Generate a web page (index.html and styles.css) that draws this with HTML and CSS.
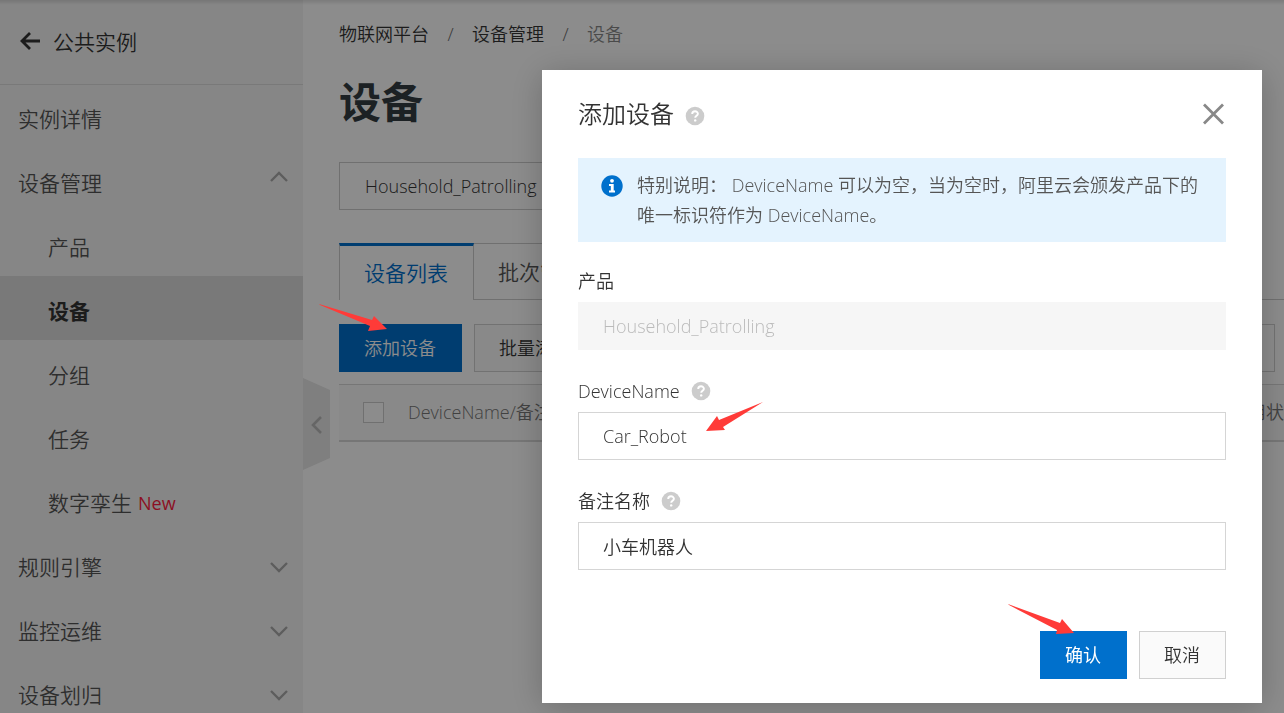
FILE: index.html
```html
<!DOCTYPE html>
<html lang="zh-CN">
<head>
<meta charset="utf-8">
<meta name="viewport" content="width=device-width, initial-scale=1">
<title>设备 - 物联网平台</title>
<link rel="stylesheet" href="styles.css">
</head>
<body>
<svg class="defs" aria-hidden="true">
  <symbol id="chevron" viewBox="0 0 20 12"><path d="M2 2l8 8 8-8" fill="none" stroke="currentColor" stroke-width="2.400"/></symbol>
  <symbol id="help" viewBox="0 0 20 20"><circle cx="10" cy="10" r="9.3" fill="#ccc"/><path d="M7.2 8c0-3.600 5.700-3.500 5.700-.2 0 1.900-2.700 2.100-2.700 4" fill="none" stroke="#fff" stroke-width="1.900"/><circle cx="10.200" cy="14.400" r="1.200" fill="#fff"/></symbol>
</svg>
<div class="app">
  <aside class="sidebar">
    <div class="sidebar-head">
      <a class="back" href="#" aria-label="返回"><svg width="22" height="20" viewBox="0 0 22 20"><path d="M21 9H3M11 1L3 9l8 8" fill="none" stroke="currentColor" stroke-width="2.800"/></svg></a>
      <span>公共实例</span>
    </div>
    <nav class="menu">
      <a class="item" href="#">实例详情</a>
      <a class="item" href="#">设备管理<svg class="chev up"><use href="#chevron"/></svg></a>
      <a class="item sub" href="#">产品</a>
      <a class="item sub active" href="#">设备</a>
      <a class="item sub" href="#">分组</a>
      <a class="item sub" href="#">任务</a>
      <a class="item sub" href="#">数字孪生<span class="new">New</span></a>
      <a class="item" href="#">规则引擎<svg class="chev"><use href="#chevron"/></svg></a>
      <a class="item" href="#">监控运维<svg class="chev"><use href="#chevron"/></svg></a>
      <a class="item" href="#">设备划归<svg class="chev"><use href="#chevron"/></svg></a>
    </nav>
    <button class="collapse" type="button" aria-label="收起菜单"><svg width="12" height="20" viewBox="0 0 12 20"><path d="M10 2l-8 8 8 8" fill="none" stroke="currentColor" stroke-width="2.600"/></svg></button>
  </aside>
  <main class="main">
    <div class="crumbs"><a href="#">物联网平台</a><i>/</i><a href="#">设备管理</a><i>/</i><span>设备</span></div>
    <h1>设备</h1>
    <select class="product-select" aria-label="产品"><option>Household_Patrolling</option></select>
    <div class="tabs">
      <button class="tab on" type="button">设备列表</button>
      <button class="tab" type="button">批次管理</button>
    </div>
    <div class="toolbar">
      <button class="btn primary" type="button">添加设备</button>
      <button class="btn" type="button">批量添加</button>
      <button class="btn refresh" type="button" aria-label="刷新"></button>
    </div>
    <table class="devices">
      <thead><tr>
        <th class="check"><input type="checkbox" aria-label="全选"></th>
        <th>DeviceName/备注名称</th>
        <th class="state">启用状态</th>
      </tr></thead>
    </table>
  </main>
</div>
<div class="overlay">
  <form class="modal" role="dialog" aria-labelledby="dialog-title">
    <header class="modal-head">
      <h2 id="dialog-title">添加设备</h2>
      <svg class="help"><use href="#help"/></svg>
      <button class="close" type="button" aria-label="关闭"><svg width="24" height="24" viewBox="0 0 24 24"><path d="M2 2.500l19 19M21 2.500l-19 19" stroke="currentColor" stroke-width="2.800"/></svg></button>
    </header>
    <div class="notice">
      <svg class="info" viewBox="0 0 22 22"><circle cx="11" cy="11" r="10.700" fill="#0070cc"/><circle cx="11" cy="5.800" r="1.900" fill="#fff"/><path d="M8 9h4.700v6.400H14v2H8v-2h1.800V11H8z" fill="#fff"/></svg>
      <p>特别说明： DeviceName 可以为空，当为空时，阿里云会颁发产品下的唯一标识符作为 DeviceName。</p>
    </div>
    <div class="fields">
      <div class="field">
        <label for="product">产品</label>
        <input id="product" type="text" value="Household_Patrolling" disabled>
      </div>
      <div class="field">
        <label for="device-name">DeviceName<svg class="help"><use href="#help"/></svg></label>
        <input id="device-name" type="text" value="Car_Robot">
      </div>
      <div class="field">
        <label for="remark">备注名称<svg class="help"><use href="#help"/></svg></label>
        <input id="remark" type="text" value="小车机器人">
      </div>
    </div>
    <footer class="actions">
      <button class="btn primary confirm" type="button">确认</button>
      <button class="btn" type="button">取消</button>
    </footer>
  </form>
</div>
<svg class="arrows" aria-hidden="true">
  <path d="M319 304L372 320 374 316 387 329 368 331 370 326 320 305Z"/>
  <path d="M763 402L723 427 725 430 706 431 717 416 719 420Z"/>
  <path d="M1008 604L1060 623 1062 619 1074 633 1056 634 1057 630 1009 605Z"/>
</svg>
</body>
</html>
```

FILE: styles.css
```css
* { box-sizing: border-box; }
body {
  margin: 0;
  color: #333;
  background: #fff;
  font: 350 18px/24px "Segoe UI", "Open Sans", "Noto Sans CJK SC", sans-serif;
  overflow: hidden;
}
a { color: inherit; text-decoration: none; }
button, input, select { font: inherit; color: inherit; }
.defs { position: absolute; width: 0; height: 0; }

.app { display: flex; min-height: 100vh; }
.sidebar { position: relative; flex: 0 0 303px; height: 100vh; background: #f5f5f5; font-size: 21px; }
.sidebar-head {
  display: flex;
  align-items: center;
  gap: 12px;
  height: 84px;
  padding: 0 19px;
  box-shadow: 0 1px #dcdcdc;
}
.back { display: flex; }
.item {
  display: flex;
  align-items: center;
  height: 64px;
  padding: 6px 14px 0 18px;
  color: #555;
}
.sub { padding-left: 48px; }
.active { background: #dcdcdc; color: #333; font-weight: 700; }
.new { margin-left: 6px; color: #ff1d43; font-size: 18px; font-weight: 400; }
.chev { width: 20px; height: 12px; margin-left: auto; color: #aaa; }
.up { transform: rotate(180deg); margin-bottom: 12px; }
.collapse {
  position: absolute;
  left: 100%;
  top: 53%;
  width: 27px;
  height: 92px;
  padding: 6px 7px 0;
  border: 0;
  background: #e7e7e7;
  color: #bbb;
  clip-path: polygon(0 0, 100% 12px, 100% 80px, 0 100%);
}

.main { flex: 1; min-width: 0; padding: 22px 0 0 36px; }
.crumbs { display: flex; }
.crumbs i { width: 43px; text-align: center; color: #666; font-style: normal; }
.crumbs span { color: #888; }
h1 { margin: 24px 0 28px; color: #333d42; font-size: 42px; line-height: 64px; font-weight: 700; }
.product-select {
  display: block;
  appearance: none;
  width: 360px;
  height: 48px;
  padding: 0 25px;
  border: 1px solid #ccc;
  border-radius: 0;
  background: transparent;
}
.tabs { display: flex; height: 57px; margin: 33px 0 24px; box-shadow: inset 0 -1px #ccc; }
.tab {
  padding: 0 24px;
  border: 1px solid #ccc;
  border-left: 0;
  background: transparent;
  color: #555;
  font-size: 21px;
}
.tab.on {
  padding-right: 25px;
  border-left: 1px solid #ccc;
  border-top: 3px solid #0070cc;
  border-bottom: 0;
  background: #fff;
  color: #0070cc;
}
.toolbar { display: flex; gap: 12px; padding-right: 9px; }
.btn {
  height: 48px;
  padding: 0 25px 0 24px;
  border: 1px solid #d0d0d0;
  background: #fafafa;
}
.btn.primary { border-color: #0070cc; background: #0070cc; color: #fff; }
.btn.confirm { font-weight: 400; }
.refresh { width: 48px; margin-left: auto; background: transparent; }
.devices { width: calc(100% + 18px); margin-top: 12px; border-collapse: collapse; }
.devices th {
  height: 56px;
  padding: 0;
  border-top: 1px solid #d8d8d8;
  border-bottom: 2px solid #d8d8d8;
  background: #fafafa;
  color: #777;
  font-weight: inherit;
  text-align: left;
  white-space: nowrap;
}
.devices .check { width: 69px; padding-left: 24px; }
.devices .state { width: 72px; }
.check input {
  display: block;
  appearance: none;
  width: 21px;
  height: 21px;
  margin: 0;
  border: 1px solid #ccc;
  background: #fff;
}

.overlay {
  position: fixed;
  inset: 0;
  display: flex;
  justify-content: flex-end;
  align-items: flex-start;
  padding: 70px 22px 10px;
  background: linear-gradient(rgba(0, 0, 0, .12), transparent 5px), rgba(0, 0, 0, .45);
}
.modal {
  width: 720px;
  max-width: 100%;
  padding: 0 36px 24px;
  background: #fff;
  box-shadow: 0 4px 32px rgba(0, 0, 0, .22);
}
.modal-head { display: flex; align-items: center; height: 88px; }
h2 { margin: 0 11px 0 0; font-size: 24px; line-height: 36px; font-weight: inherit; }
.help { width: 20px; height: 20px; }
.modal-head .help { margin-top: 4px; }
.close { display: flex; margin-left: auto; padding: 0; border: 0; background: none; color: #888; }
.notice {
  display: flex;
  gap: 14px;
  padding: 12px 23px;
  margin-bottom: 27px;
  background: #e4f3fe;
  color: #555;
  line-height: 30px;
}
.notice p { margin: 0; }
.info { flex: none; width: 22px; height: 22px; margin-top: 5px; }
.fields { display: grid; gap: 29px; }
.field { display: grid; gap: 9px; }
.field label { display: flex; align-items: center; gap: 11px; }
.field input {
  width: 100%;
  height: 48px;
  padding: 0 24px;
  border: 1px solid #d5d5d5;
  border-radius: 0;
  background: #fff;
}
.field input:disabled { border-color: #f6f6f6; background: #f6f6f6; color: #bbb; }
.actions { display: flex; justify-content: flex-end; gap: 12px; margin-top: 61px; }

.arrows {
  position: fixed;
  inset: 0;
  width: 100%;
  height: 100%;
  fill: #ff3b38;
  pointer-events: none;
}
```
